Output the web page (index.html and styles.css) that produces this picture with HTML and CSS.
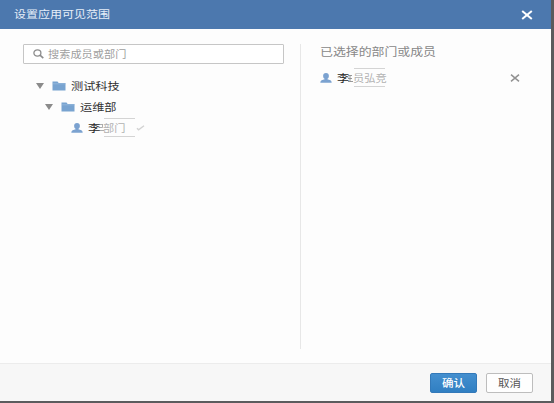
FILE: index.html
```html
<!DOCTYPE html>
<html lang="zh-CN">
<head>
<meta charset="utf-8">
<title>设置应用可见范围</title>
<link rel="stylesheet" href="styles.css">
</head>
<body>
<svg class="defs" width="0" height="0">
  <symbol id="folder" viewBox="0 0 14 10"><path d="M0.5 0.5h5l1.2 1.5h6.8v7.5h-13z" fill="#78a3d0"/><path d="M1 2.8h12.5" stroke="#a4c3e2" stroke-width=".6"/></symbol>
  <symbol id="person" viewBox="0 0 12 10"><ellipse cx="6" cy="3" rx="2.9" ry="3" fill="#7ba2d0"/><path d="M4.6 5h2.8v1.3l3 .9Q11.7 7.7 11.7 9.7H.3Q.3 7.7 1.6 7.2l3-.9z" fill="#7ba2d0"/></symbol>
  <symbol id="cross" viewBox="0 0 10 8"><path d="M1 .7l8 6.6M9 .7L1 7.3" stroke="currentColor"/></symbol>
</svg>
<div class="dialog">
  <header class="header">
    <span class="text title">设置应用可见范围</span>
    <svg class="close"><use href="#cross"/></svg>
  </header>
  <main class="body">
    <section class="left">
      <div class="search">
        <svg class="lens" viewBox="0 0 11 10"><ellipse cx="4.4" cy="4" rx="3.5" ry="3.1" fill="none" stroke="#8c8c8c" stroke-width="1.3"/><path d="M7 6.2l3.3 3" stroke="#8c8c8c" stroke-width="1.6"/></svg>
        <span class="text">搜索成员或部门</span>
      </div>
      <div class="tree">
        <div class="node"><i class="arrow"></i><svg class="folder"><use href="#folder"/></svg><span class="text">测试科技</span></div>
        <div class="node level2"><i class="arrow"></i><svg class="folder"><use href="#folder"/></svg><span class="text">运维部</span></div>
        <div class="node level3"><svg class="person"><use href="#person"/></svg><span class="text name">李</span><svg class="scrap" viewBox="0 0 5 9"><path d="M0 1.5h4M0 4.5h3.5M0 7.5h5M3.5 1.5v3" fill="none" stroke="#a5a5a5" stroke-width=".9"/></svg><span class="patch"><span class="text">部门</span></span><svg class="mark" viewBox="0 0 9 6"><path d="M1 3.2l1.6 1.6L8 .8" fill="none" stroke="#d2d2d2" stroke-width="1.4"/></svg></div>
      </div>
    </section>
    <section class="right">
      <div class="text heading">已选择的部门或成员</div>
      <div class="member"><svg class="person"><use href="#person"/></svg><span class="text name">李</span><svg class="scrap" viewBox="0 0 5 9"><path d="M0 1.5h4M0 4.5h4M0 7.5h5M2 1.5v6" fill="none" stroke="#8d8d8d" stroke-width=".9"/></svg><span class="patch wide"><span class="text">员弘竞</span></span><svg class="remove"><use href="#cross"/></svg></div>
    </section>
  </main>
  <footer class="footer">
    <button class="button primary"><span class="text">确认</span></button>
    <button class="button"><span class="text">取消</span></button>
  </footer>
</div>
</body>
</html>
```
FILE: styles.css
```css
* { box-sizing: border-box; }
body {
  margin: 0;
  height: 403px;
  overflow: hidden;
  background: #5b5b5d;
  font-family: "Noto Sans CJK SC", sans-serif;
  font-size: 12.2px;
  color: #333;
}
.defs { display: none; }
svg { display: block; flex: none; }
.text {
  display: inline-block;
  white-space: nowrap;
  line-height: 16px;
  transform: scaleY(.87);
}
.dialog {
  display: flex;
  flex-direction: column;
  width: 551px;
  height: 401px;
  background: #fdfdfd;
}
.header {
  display: flex;
  flex: none;
  align-items: center;
  justify-content: space-between;
  height: 29px;
  padding: 0 18px 0 14px;
  background: #4c78ae;
  color: #e6eef8;
}
.title { margin-bottom: 2px; font-size: 12px; }
.close { width: 12px; height: 10px; color: #fff; stroke-width: 1.7; }
.body { display: flex; flex: 1; padding-top: 15px; }
.left {
  width: 301px;
  height: 305px;
  padding: 0 16px 0 23px;
  border-right: 1px solid #e7e7e7;
}
.search {
  display: flex;
  align-items: center;
  gap: 4px;
  height: 20px;
  padding-left: 9px;
  border: 1px solid #c6c6c6;
  border-radius: 1px;
  background: #fff;
  font-size: 11.2px;
  color: #a0a0a0;
}
.lens { width: 11px; height: 10px; }
.tree { padding: 11px 0 0 12px; }
.node { display: flex; align-items: center; height: 21px; }
.level2 { padding-left: 9px; }
.level3 { padding-left: 36px; }
.arrow {
  border: 4px solid transparent;
  border-top: 6px solid #8b8b8b;
  border-bottom: 0;
  margin: 1px 8px 0 1px;
}
.folder { width: 14px; height: 10px; margin-right: 5px; }
.person { width: 12px; height: 10px; margin-right: 5px; }
.name { width: 11px; color: #252525; }
.scrap { width: 5px; height: 9px; }
.patch {
  display: flex;
  align-items: center;
  width: 31px;
  height: 19px;
  border: solid #d4d4d4;
  border-width: 1px 0;
  font-size: 11.2px;
  color: #b2b2b2;
}
.patch .text { margin-left: -1px; }
.mark { width: 9px; height: 6px; margin-left: 1px; }
.right { flex: 1; padding: 0 31px 0 19px; }
.heading {
  display: block;
  font-size: 12.9px;
  color: #888;
}
.member { display: flex; align-items: center; height: 20px; margin-top: 8px; }
.wide { margin: 0 0 1px 1px; font-size: 11.2px; }
.remove { width: 10px; height: 8px; margin-left: auto; color: #929292; stroke-width: 1.5; }
.footer {
  display: flex;
  flex: none;
  align-items: center;
  justify-content: flex-end;
  gap: 9px;
  height: 38px;
  padding: 1px 18px 0 0;
  border-top: 1px solid #ececec;
  background: #f7f7f7;
}
.button {
  display: flex;
  align-items: center;
  justify-content: center;
  width: 47px;
  height: 20px;
  padding: 0;
  border: 1px solid #bdbdbd;
  border-radius: 2px;
  background: #fefefe;
  font-family: inherit;
  font-size: 11.5px;
  color: #555;
}
.primary {
  border-color: #3379b9;
  background: linear-gradient(#448fcf, #307fc2);
  color: #fff;
  font-weight: 500;
}
```
